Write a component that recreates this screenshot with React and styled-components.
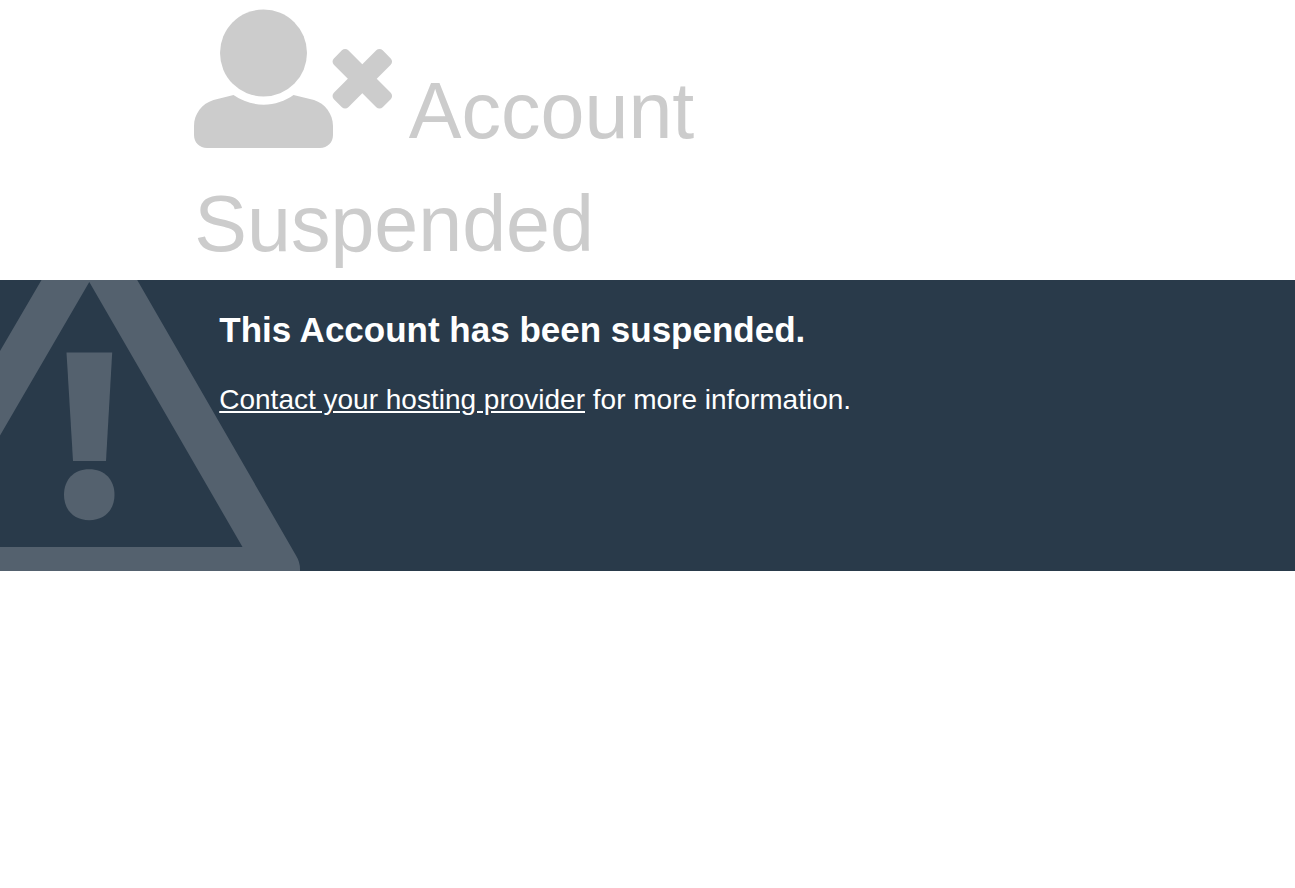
import React from "react";
import styled, { createGlobalStyle } from "styled-components";

const GlobalStyle = createGlobalStyle`
  body {
    margin: 0;
    background: #fff;
    color: #ccc;
    font-family: Arial, "Liberation Sans", Helvetica, sans-serif;
  }
`;

const Container = styled.div`
  width: 70%;
  margin: 0 auto;
`;

const Title = styled.h1`
  margin: 0;
  font-size: 79px;
  font-weight: 400;
  line-height: 113px;
`;

const UserIcon = styled.svg`
  width: 198px;
  height: 139px;
  margin: 9px -1px 0 0;
  vertical-align: -10px;
  overflow: visible;
  fill: currentColor;
`;

const Notice = styled.section`
  position: relative;
  overflow: hidden;
  box-sizing: border-box;
  min-height: 291px;
  background: #293a4a;
  color: #fff;
`;

const WarningMark = styled.svg`
  position: absolute;
  top: 0;
  left: 0;
  width: 300px;
  height: 291px;
  fill: #54616e;
`;

const NoticeBody = styled.div`
  position: relative;
  padding: 25px;
`;

const NoticeHeading = styled.h2`
  margin: 0 0 25px;
  font-size: 35px;
  font-weight: 700;
  line-height: 50px;
`;

const NoticeText = styled.p`
  margin: 0;
  font-size: 28px;
  line-height: 40px;
`;

const ContactLink = styled.a`
  color: inherit;
  text-decoration: underline;
`;

function UserRemovedIcon() {
  return (
    <UserIcon viewBox="0 0 198 139" aria-hidden="true">
      <circle cx="69.5" cy="44" r="43.5" />
      <path d="M39.5 86 L19.5 91 C8 94.5 0 105 0 117 V126 C0 133.5 5.5 139 13 139 H126 C133.5 139 139 133.5 139 126 V117 C139 105 131 94.5 120 91 L99.5 86 C91 92 81 95.7 69.7 95.7 C58.5 95.7 48.5 92 39.5 86 Z" />
      <g transform="translate(168.3 69.8)">
        <rect x="-34.5" y="-10.2" width="69" height="20.4" rx="4.5" transform="rotate(45)" />
        <rect x="-34.5" y="-10.2" width="69" height="20.4" rx="4.5" transform="rotate(-45)" />
      </g>
    </UserIcon>
  );
}

function WarningTriangle() {
  return (
    <WarningMark viewBox="0 0 300 291" aria-hidden="true">
      <path
        fillRule="evenodd"
        d="M41.5 0 H137.2 L296 275.5 Q300 282 300 289 V291 H0 V267 H242.5 L89.3 2 L0 155.5 V71 Z"
      />
      <path d="M66.5 72.5 H112.2 L106 181 H73 Z" />
      <path d="M89.2 189.2 C104.5 189.2 114.5 199.5 114.5 214.8 C114.5 230 104.5 240.2 89.2 240.2 C74 240.2 64 230 64 214.8 C64 199.5 74 189.2 89.2 189.2 Z" />
    </WarningMark>
  );
}

export default function App() {
  return (
    <>
      <GlobalStyle />
      <header>
        <Container>
          <Title>
            <UserRemovedIcon /> Account Suspended
          </Title>
        </Container>
      </header>
      <main>
        <Notice>
          <WarningTriangle />
          <Container>
            <NoticeBody>
              <NoticeHeading>This Account has been suspended.</NoticeHeading>
              <NoticeText>
                <ContactLink href="#contact">Contact your hosting provider</ContactLink> for more
                information.
              </NoticeText>
            </NoticeBody>
          </Container>
        </Notice>
      </main>
    </>
  );
}
